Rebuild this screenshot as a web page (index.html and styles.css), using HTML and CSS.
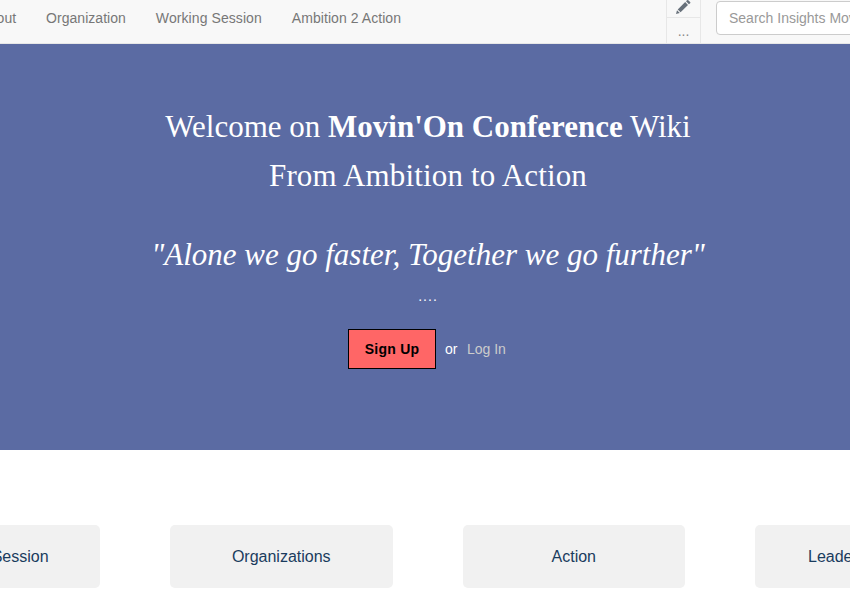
FILE: index.html
```html
<!DOCTYPE html>
<html lang="en">
<head>
<meta charset="utf-8">
<title>Movin'On Conference Wiki</title>
<link rel="stylesheet" href="styles.css">
</head>
<body>
<header class="navbar">
  <nav class="links">
    <a>About</a><a class="organization">Organization</a><a class="session">Working Session</a><a class="ambition">Ambition 2 Action</a>
  </nav>
  <div class="tools">
    <div class="tool edit"><svg width="15" height="15" viewBox="0 0 15 15"><path d="M0 14 1 10.2 3.8 13ZM1.7 9.4 9.2 2.1 12 4.9 4.6 12.3ZM10 1.3 11 .3Q11.6-.3 12.3.3L14.1 2.1Q14.7 2.7 14.1 3.3L12.9 4.2Z" fill="#68717b"/></svg></div>
    <div class="tool more">...</div>
  </div>
  <div class="search">Search Insights Movin'On</div>
</header>
<main>
  <section class="hero">
    <h1>Welcome on <b>Movin'On Conference</b> Wiki</h1>
    <h1 class="subtitle">From Ambition to Action</h1>
    <p class="quote">"Alone we go faster, Together we go further"</p>
    <p class="dots">....</p>
    <div class="actions"><a class="signup">Sign Up</a><span>or</span><a class="login">Log In</a></div>
  </section>
  <section class="cards">
    <a>Working Session</a><a>Organizations</a><a>Action</a><a class="leadership">Leadership</a>
  </section>
</main>
</body>
</html>
```
FILE: styles.css
```css
* { box-sizing: border-box; }
body { margin: 0; width: 850px; height: 593px; overflow: hidden; background: #fff; font: 14px/20px "Liberation Sans", Arial, sans-serif; color: #333; }
h1, p { margin: 0; }
main { overflow: hidden; }
.navbar { display: flex; height: 44px; background: #f8f8f8; border-bottom: 1px solid #e7e7e7; overflow: hidden; }
.links { display: flex; gap: 30px; width: 666px; flex: none; padding-top: 8px; margin-left: -20.5px; margin-right: 20.5px; color: #777; white-space: nowrap; }
.organization { letter-spacing: .03px; }
.session { letter-spacing: .08px; }
.ambition { letter-spacing: .06px; }
.tools { width: 35px; flex: none; border: solid #e7e7e7; border-width: 0 1px; }
.tool { height: 18px; text-align: center; color: #888; }
.edit { border-bottom: 1px solid #e7e7e7; }
.edit svg { display: block; margin: 0 auto; }
.more { line-height: 27px; }
.search { width: 200px; height: 34px; flex: none; margin: 1px 0 0 15px; padding: 6px 12px; border: 1px solid #ccc; border-radius: 4px; background: #fff; color: #999; white-space: nowrap; }
.hero { height: 406px; padding: 58px 0 0 6px; background: #5b6ba3; color: #fff; text-align: center; }
.hero h1, .quote { font: 31px/49px "Liberation Serif", "Times New Roman", serif; }
.hero .subtitle { letter-spacing: .16px; }
.hero .quote { margin-top: 30px; font-style: italic; }
.dots { margin-top: 7px; letter-spacing: 1px; }
.actions { display: flex; align-items: center; margin: 23px 0 0 342px; }
.signup { width: 88px; height: 40px; margin-right: 9px; border: 1px solid #000; background: #f66; color: #000; font-weight: bold; line-height: 38px; letter-spacing: .25px; }
.login { margin-left: 9.5px; color: #ccc; }
.cards { display: grid; grid-template-columns: repeat(4, 222.5px); gap: 70px; margin: 75px 0 0 -122.5px; }
.cards a { height: 63px; border-radius: 5px; background: #f1f1f1; color: #1a3c5e; font-size: 16px; line-height: 63px; text-align: center; }
.cards .leadership { padding-left: 53px; text-align: left; }
```
